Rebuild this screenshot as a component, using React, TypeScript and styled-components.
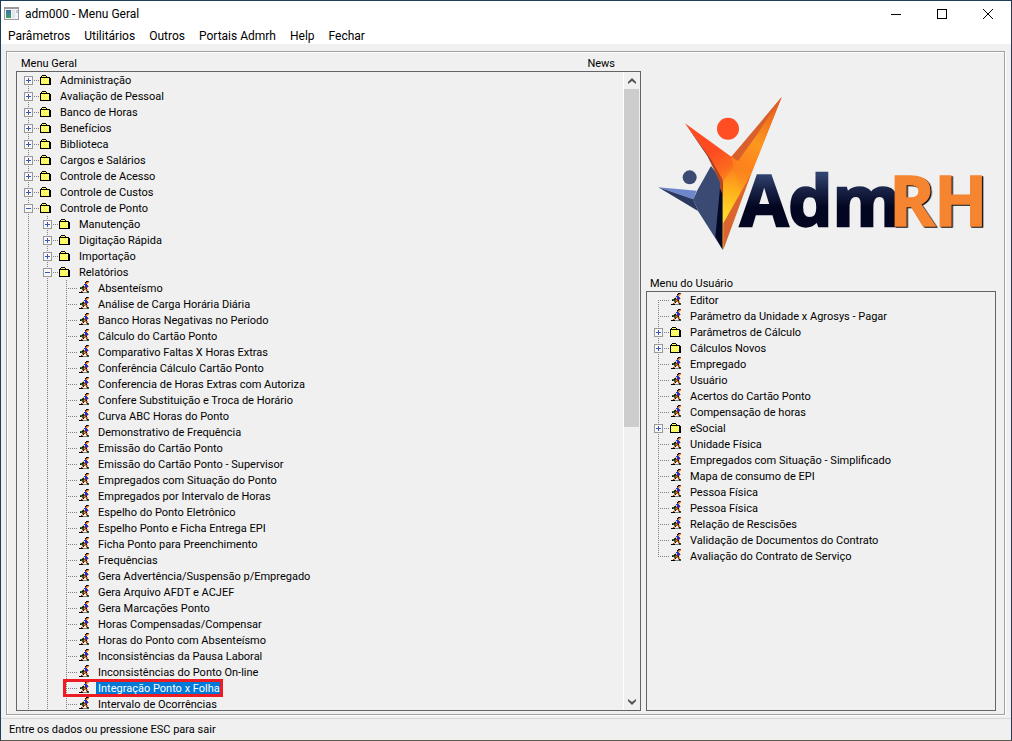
import React from "react";
import styled, { createGlobalStyle, css } from "styled-components";

const GlobalStyle = createGlobalStyle`
  * { box-sizing: border-box; }
  body { margin: 0; background: #f0f0f0; color: #000; font: 11px/18px Roboto, Arial, sans-serif; }
  button { font: inherit; color: inherit; background: none; border: 0; padding: 0; margin: 0; text-align: left; }
  ul { list-style: none; margin: 0; padding: 0; }
  svg { display: block; }
`;

const Window = styled.div`
  display: flex;
  flex-direction: column;
  height: 100vh;
  border: 1px solid #1d3f5e;
  border-right-color: #2a3a52;
  border-bottom-color: #5c594e;
`;

const TitleBar = styled.header`
  display: flex;
  align-items: center;
  height: 25px;
  background: #fff;
  padding-left: 3px;
`;

const Title = styled.h1`
  flex: 1;
  margin: 0 0 0 6px;
  font: 12px/16px Roboto, "Segoe UI", sans-serif;
`;

const CaptionButton = styled.button`
  display: flex;
  align-items: center;
  justify-content: center;
  width: 46px;
  height: 25px;
`;

const MenuBar = styled.nav`
  display: flex;
  height: 18px;
  background: #fff;
  font: 12px/20px Roboto, "Segoe UI", sans-serif;
`;

const MenuButton = styled.button`
  padding: 0 7px;
`;

const Groove = styled.main`
  flex: 1;
  min-height: 0;
  display: flex;
  gap: 5px;
  margin: 7px 6px 3px 5px;
  padding: 3px 8px 3px 9px;
  border: 1px solid #a0a0a0;
  box-shadow: 1px 1px 0 #fff, inset 1px 1px 0 #fff;
`;

const Column = styled.section<{ $grow: number }>`
  flex: ${(p) => p.$grow} 1 0;
  min-width: 0;
  min-height: 0;
  display: flex;
  flex-direction: column;
`;

const Headings = styled.div`
  display: flex;
  justify-content: space-between;
  padding: 0 26px 0 5px;
`;

const Heading = styled.h2<{ $inset?: boolean }>`
  margin: 0;
  padding-left: ${(p) => (p.$inset ? "4px" : "0")};
  height: 16px;
  font-size: 11px;
  line-height: 18px;
  font-weight: 400;
`;

const Panel = styled.div`
  flex: 1;
  min-height: 0;
  display: flex;
  border: 1px solid #646464;
`;

const Tree = styled.ul`
  flex: 1;
  min-width: 0;
  overflow: hidden;
  padding-left: 2px;
`;

const Row = styled.div`
  display: flex;
  height: 16px;
`;

const dots = (dir: string) => `repeating-linear-gradient(${dir}, #808080 0 1px, transparent 1px 2px)`;

const Guide = styled.span<{ $line?: "full" | "top" | "bottom"; $branch?: boolean }>`
  position: relative;
  flex: none;
  width: 19px;
  height: 16px;
  ${(p) =>
    p.$line &&
    css`
      &::before {
        content: "";
        position: absolute;
        left: 9px;
        width: 1px;
        top: ${p.$line === "bottom" ? "8px" : "0"};
        bottom: ${p.$line === "top" ? "8px" : "0"};
        background: ${dots("to bottom")};
      }
    `}
  ${(p) =>
    p.$branch &&
    css`
      &::after {
        content: "";
        position: absolute;
        left: 9px;
        width: 12px;
        top: 8px;
        height: 1px;
        background: ${dots("to right")};
      }
    `}
`;

const Expander = styled.button`
  position: absolute;
  z-index: 1;
  left: 5px;
  top: 4px;
  width: 9px;
  height: 9px;
`;

const IconBox = styled.span<{ $program?: boolean }>`
  position: relative;
  flex: none;
  width: 20px;
  padding-left: ${(p) => (p.$program ? "3px" : "2px")};
`;

const Label = styled.button<{ $selected?: boolean }>`
  height: 16px;
  padding: 1px 2px 0;
  line-height: 16px;
  white-space: nowrap;
  ${(p) => p.$selected && css`background: #0078d7; color: #fff;`}
`;

const Highlight = styled.span`
  position: absolute;
  z-index: 2;
  top: -1px;
  bottom: -1px;
  left: -13px;
  width: 160px;
  border: 3px solid #ed1c24;
  pointer-events: none;
`;

const ScrollBar = styled.div`
  display: flex;
  flex-direction: column;
  align-items: center;
  width: 17px;
  border-left: 1px solid #fff;
  padding-right: 1px;
`;

const ScrollButton = styled.button`
  display: flex;
  align-items: center;
  justify-content: center;
  width: 15px;
  height: 17px;
`;

const Track = styled.div`
  flex: 1;
  width: 15px;
`;

const Thumb = styled.div`
  height: 56%;
  background: #cdcdcd;
`;

const LogoArea = styled.div`
  height: 220px;
  padding: 40px 0 0 11px;
`;

const LogoOrange = styled.g`
  fill: #f68532;
  stroke: #f68532;
  stroke-width: 4px;
  filter: drop-shadow(4px 3px 0 #101010);
`;

const StatusBar = styled.footer`
  height: 22px;
  border-top: 1px solid #d7d7d7;
  padding: 2px 8px;
`;

const RUNNER = [
  ".......KKR.",
  "......KROO.",
  "......ROO..",
  ".....BBR...",
  "....OWBBR..",
  "...RKOBBBO.",
  ".GGKGRRBO..",
  ".KGGRORK...",
  "...RGRORO..",
  "...OK..RO..",
  "..RO...OKG.",
  "KKKKSSSSGG.",
];

const FOLDER = [
  "..KKKK.....",
  ".KWYWYK....",
  "KKKKKKKKKK.",
  "KWYWYWYWYKK",
  "KYWYWYWYWKK",
  "KWYWYWYWYKK",
  "KYWYWYWYWKK",
  "KWYWYWYWYKK",
  "KYWYWYWYWKK",
  "KKKKKKKKKKK",
];

const PALETTE: Record<string, string> = {
  K: "#000000",
  R: "#8c3818",
  O: "#e89858",
  B: "#1030e8",
  W: "#fffbd0",
  G: "#1c6424",
  S: "#808080",
  Y: "#ffff00",
};

function Pixels({ art, top }: { art: string[]; top: number }) {
  const paths: Record<string, string> = {};
  art.forEach((line, y) =>
    [...line].forEach((c, x) => {
      if (c !== ".") paths[c] = (paths[c] || "") + `M${x} ${y}h1v1h-1z`;
    })
  );
  return (
    <svg width="11" height={16} viewBox={`0 ${-top} 11 16`} shapeRendering="crispEdges" aria-hidden="true">
      {Object.entries(paths).map(([c, d]) => (
        <path key={c} d={d} fill={PALETTE[c]} />
      ))}
    </svg>
  );
}

type Node = { label: string; open?: boolean; folder?: boolean; selected?: boolean; children?: Node[] };

const folder = (label: string, children?: Node[]): Node => ({ label, folder: true, open: !!children, children });

const REPORTS = [
  "Absenteísmo",
  "Análise de Carga Horária Diária",
  "Banco Horas Negativas no Período",
  "Cálculo do Cartão Ponto",
  "Comparativo Faltas X Horas Extras",
  "Conferência Cálculo Cartão Ponto",
  "Conferencia de Horas Extras com Autoriza",
  "Confere Substituição e Troca de Horário",
  "Curva ABC Horas do Ponto",
  "Demonstrativo de Frequência",
  "Emissão do Cartão Ponto",
  "Emissão do Cartão Ponto - Supervisor",
  "Empregados com Situação do Ponto",
  "Empregados por Intervalo de Horas",
  "Espelho do Ponto Eletrônico",
  "Espelho Ponto e Ficha Entrega EPI",
  "Ficha Ponto para Preenchimento",
  "Frequências",
  "Gera Advertência/Suspensão p/Empregado",
  "Gera Arquivo AFDT e ACJEF",
  "Gera Marcações Ponto",
  "Horas Compensadas/Compensar",
  "Horas do Ponto com Absenteísmo",
  "Inconsistências da Pausa Laboral",
  "Inconsistências do Ponto On-line",
  "Integração Ponto x Folha",
  "Intervalo de Ocorrências",
];

const MAIN_TREE: Node[] = [
  ...[
    "Administração",
    "Avaliação de Pessoal",
    "Banco de Horas",
    "Benefícios",
    "Biblioteca",
    "Cargos e Salários",
    "Controle de Acesso",
    "Controle de Custos",
  ].map((l) => folder(l)),
  folder("Controle de Ponto", [
    folder("Manutenção"),
    folder("Digitação Rápida"),
    folder("Importação"),
    folder(
      "Relatórios",
      REPORTS.map((label) => ({ label, selected: label === "Integração Ponto x Folha" }))
    ),
  ]),
];

const USER_TREE: Node[] = [
  { label: "Editor" },
  { label: "Parâmetro da Unidade x Agrosys - Pagar" },
  folder("Parâmetros de Cálculo"),
  folder("Cálculos Novos"),
  { label: "Empregado" },
  { label: "Usuário" },
  { label: "Acertos do Cartão Ponto" },
  { label: "Compensação de horas" },
  folder("eSocial"),
  { label: "Unidade Física" },
  { label: "Empregados com Situação - Simplificado" },
  { label: "Mapa de consumo de EPI" },
  { label: "Pessoa Física" },
  { label: "Pessoa Física" },
  { label: "Relação de Rescisões" },
  { label: "Validação de Documentos do Contrato" },
  { label: "Avaliação do Contrato de Serviço" },
];

function ExpanderIcon({ open }: { open?: boolean }) {
  return (
    <svg width="9" height="9" shapeRendering="crispEdges" aria-hidden="true">
      <rect x="0" y="0" width="9" height="9" fill="#989898" />
      <rect x="1" y="1" width="7" height="7" fill="#f8f8f8" />
      <path d={open ? "M2 4h5v1H2z" : "M2 4h5v1H2zM4 2h1v5H4z"} fill="#3a58ac" />
    </svg>
  );
}

function Branch({ nodes, depth = 0, more }: { nodes: Node[]; depth?: number; more?: boolean }) {
  return (
    <>
      {nodes.map((n, i) => {
        const first = depth === 0 && i === 0;
        const last = !more && i === nodes.length - 1;
        return (
          <li key={i} role="treeitem" aria-expanded={n.folder ? !!n.open : undefined} aria-selected={!!n.selected}>
            <Row>
              {Array.from({ length: depth }, (_, d) => (
                <Guide key={d} $line="full" />
              ))}
              <Guide $branch $line={first ? "bottom" : last ? "top" : "full"}>
                {n.folder && (
                  <Expander aria-label={(n.open ? "Recolher " : "Expandir ") + n.label}>
                    <ExpanderIcon open={n.open} />
                  </Expander>
                )}
              </Guide>
              <IconBox $program={!n.folder}>
                {n.folder ? <Pixels art={FOLDER} top={3} /> : <Pixels art={RUNNER} top={1} />}
                {n.selected && <Highlight />}
              </IconBox>
              <Label $selected={n.selected}>{n.label}</Label>
            </Row>
            {n.children && (
              <ul role="group">
                <Branch nodes={n.children} depth={depth + 1} more={more} />
              </ul>
            )}
          </li>
        );
      })}
    </>
  );
}

function Logo() {
  return (
    <svg width="332" height="156" viewBox="51 30 996 468" role="img" aria-label="AdmRH">
      <defs>
        <linearGradient id="navy" gradientUnits="userSpaceOnUse" x1="0" y1="270" x2="0" y2="390">
          <stop offset="0" stopColor="#30426e" />
          <stop offset="0.35" stopColor="#1a2448" />
          <stop offset="0.8" stopColor="#030620" />
        </linearGradient>
        <linearGradient id="flame" gradientUnits="userSpaceOnUse" x1="215" y1="200" x2="290" y2="340">
          <stop offset="0" stopColor="#ff4a22" />
          <stop offset="0.4" stopColor="#fb6a1e" />
          <stop offset="0.75" stopColor="#ff9a1c" />
          <stop offset="1" stopColor="#ffc41c" />
        </linearGradient>
        <linearGradient id="arm" gradientUnits="userSpaceOnUse" x1="290" y1="260" x2="425" y2="40">
          <stop offset="0" stopColor="#fb7a1c" />
          <stop offset="0.4" stopColor="#fd981e" />
          <stop offset="1" stopColor="#e4521c" />
        </linearGradient>
        <linearGradient id="glow" gradientUnits="userSpaceOnUse" x1="310" y1="230" x2="255" y2="410">
          <stop offset="0" stopColor="#fb8a1c" stopOpacity="0" />
          <stop offset="0.5" stopColor="#ffb01c" />
          <stop offset="1" stopColor="#ffe428" />
        </linearGradient>
      </defs>
      <circle cx="149" cy="277" r="21" fill="#3a4a72" />
      <path d="M55 307L170 317L160 343Z" fill="#6d86cc" />
      <path d="M160 343L172 316L213 243L248 290V494L174 378Z" fill="#3a4a72" />
      <path d="M55 307L160 343L174 378Z" fill="#2b3960" />
      <path d="M240 310L248 290V494L226 455Z" fill="#030824" />
      <circle cx="264" cy="131" r="33" fill="#ff4d24" />
      <path d="M135 115L202 213L248 292V275L215 222Z" fill="#8c3c28" />
      <path d="M425 36L333 268L248 494V285L212 222L135 115L274 215L300 222Z" fill="url(#flame)" />
      <path d="M425 36L333 268L300 330L274 215L320 165Z" fill="url(#arm)" />
      <path d="M425 36L274 215L294 228L350 150Z" fill="#d9602c" />
      <path d="M333 268L300 215L250 290V415Z" fill="url(#glow)" />
      <path d="M202 213L240 292V310L248 330V285Z" fill="#b64824" />
      <path d="M333 268L250 415V494Z" fill="#dc6430" />
      <g fontFamily='"Open Sans", sans-serif' fontWeight="700" fontSize="210">
        <text x="300" y="422" fill="url(#navy)" stroke="url(#navy)" strokeWidth="7">Adm</text>
        <LogoOrange>
          <text x="747" y="423">R</text>
          <text x="882" y="423">H</text>
        </LogoOrange>
      </g>
    </svg>
  );
}

export default function App() {
  return (
    <Window>
      <GlobalStyle />
      <TitleBar>
        <svg width="15" height="13" viewBox="0 0 15 13" shapeRendering="crispEdges" aria-hidden="true">
          <defs>
            <linearGradient id="app" x1="0" y1="0" x2="0" y2="1">
              <stop offset="0" stopColor="#3f6fa8" />
              <stop offset="1" stopColor="#3fa06a" />
            </linearGradient>
          </defs>
          <rect width="15" height="13" fill="#9a9a9a" />
          <rect x="1" y="2" width="13" height="10" fill="#f4f4f4" />
          <rect x="2" y="3" width="5" height="8" fill="url(#app)" />
          <rect x="8" y="3" width="3" height="8" fill="#dfe6ee" />
          <rect x="12" y="3" width="2" height="3" fill="#b8cce0" />
        </svg>
        <Title>adm000 - Menu Geral</Title>
        <CaptionButton aria-label="Minimizar">
          <svg width="10" height="10" shapeRendering="crispEdges"><path d="M0 5h10v1H0z" /></svg>
        </CaptionButton>
        <CaptionButton aria-label="Maximizar">
          <svg width="10" height="10" shapeRendering="crispEdges"><path d="M0 0h10v10H0zM1 1v8h8V1z" fillRule="evenodd" /></svg>
        </CaptionButton>
        <CaptionButton aria-label="Fechar janela">
          <svg width="10" height="10"><path d="M0 0L10 10M10 0L0 10" stroke="#000" strokeWidth="1" /></svg>
        </CaptionButton>
      </TitleBar>
      <MenuBar>
        {["Parâmetros", "Utilitários", "Outros", "Portais Admrh", "Help", "Fechar"].map((m) => (
          <MenuButton key={m}>{m}</MenuButton>
        ))}
      </MenuBar>
      <Groove>
        <Column $grow={625}>
          <Headings>
            <Heading>Menu Geral</Heading>
            <Heading>News</Heading>
          </Headings>
          <Panel>
            <Tree role="tree" aria-label="Menu Geral">
              <Branch nodes={MAIN_TREE} more />
            </Tree>
            <ScrollBar>
              <ScrollButton aria-label="Rolar para cima">
                <svg width="8" height="6"><path d="M0 4L4 0L8 4V6L4 3L0 6Z" fill="#505050" /></svg>
              </ScrollButton>
              <Track><Thumb /></Track>
              <ScrollButton aria-label="Rolar para baixo">
                <svg width="8" height="6"><path d="M0 2L4 6L8 2V0L4 3L0 0Z" fill="#505050" /></svg>
              </ScrollButton>
            </ScrollBar>
          </Panel>
        </Column>
        <Column $grow={350}>
          <LogoArea><Logo /></LogoArea>
          <Heading $inset>Menu do Usuário</Heading>
          <Panel>
            <Tree role="tree" aria-label="Menu do Usuário">
              <Branch nodes={USER_TREE} />
            </Tree>
          </Panel>
        </Column>
      </Groove>
      <StatusBar>Entre os dados ou pressione ESC para sair</StatusBar>
    </Window>
  );
}
